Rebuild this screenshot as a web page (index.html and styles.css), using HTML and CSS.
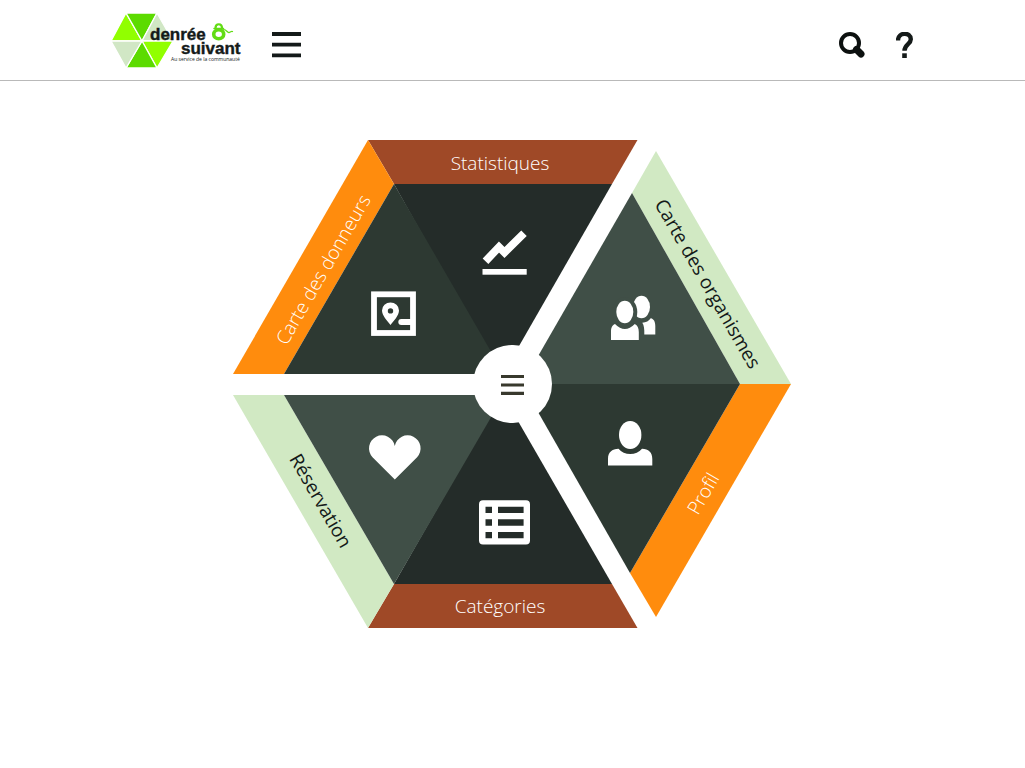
FILE: index.html
```html
<!DOCTYPE html>
<html lang="fr">
<head>
<meta charset="utf-8">
<meta name="viewport" content="width=device-width, initial-scale=1">
<title>Denrée Ô suivant</title>
<link rel="stylesheet" href="styles.css">
</head>
<body>
<header class="site-header">
  <div class="header-inner">
    <a class="brand" href="#accueil" aria-label="Denrée Ô suivant, accueil">
      <svg class="logo" viewBox="112 13 130 55">
        <g stroke="#fff" stroke-width="1.3" stroke-linejoin="round">
          <polygon fill="#91ff00" points="111,41 126,13 142,41"/>
          <polygon fill="#5cdb00" points="126,13 157,13 142,41"/>
          <polygon fill="#d1e7c5" points="157,13 173,41 142,41"/>
          <polygon fill="#91ff00" points="173,41 157,68 142,41"/>
          <polygon fill="#5cdb00" points="157,68 126,68 142,41"/>
          <polygon fill="#d1e7c5" points="126,68 111,41 142,41"/>
        </g>
        <text class="logo-name" x="150" y="40">denrée</text>
        <text class="logo-name" x="181" y="54">suivant</text>
        <text class="logo-tag" x="171" y="61">Au service de la communauté</text>
        <g fill="none" stroke="#62dc14" stroke-linecap="round">
          <ellipse cx="218.700" cy="34.300" rx="5" ry="4.500" stroke-width="3.600"/>
          <path d="M215.500 28C215.500 23 222 23 222 28" stroke-width="2.200"/>
          <path d="M214 28.500H223.500" stroke-width="1.500"/>
          <path d="M222.500 30C226 28 227 33 229 32.500S231 31 232.500 31.500" stroke-width="1.300"/>
        </g>
      </svg>
    </a>
    <button class="icon-button menu-button" type="button" aria-label="Menu">
      <svg width="30" height="26" viewBox="0 0 30 26"><path d="M0 2H29M0 12.700H29M0 23.400H29" stroke="#141a19" stroke-width="3.800"/></svg>
    </button>
    <div class="tools">
      <button class="icon-button" type="button" aria-label="Rechercher">
        <svg width="26" height="26" viewBox="0 0 26 26"><g fill="none" stroke="#0c100f"><circle cx="11" cy="11" r="9" stroke-width="4"/><path d="M17.500 17.500L22 22" stroke-width="7" stroke-linecap="round"/></g></svg>
      </button>
      <button class="icon-button" type="button" aria-label="Aide">
        <svg width="17" height="26" viewBox="0 0 17 26"><path d="M2 8.500C2 -.2 14.800 -.2 14.800 7.300C14.800 12.300 8.500 12 8.500 18.800" fill="none" stroke="#141a19" stroke-width="4.400"/><rect x="6.200" y="21.300" width="4.600" height="4.700" fill="#141a19"/></svg>
      </button>
    </div>
  </div>
</header>
<main class="content">
  <nav class="wheel" aria-label="Menu principal">
    <svg class="wheel-art" viewBox="233 140 559 488">
      <a href="#statistiques">
        <polygon class="rust" points="368,140 637.500,140 612,184 394,184"/>
        <polygon class="dark" points="394,184 612,184 503,374 500,374"/>
        <path d="M485.500 261.200L499 247L504.500 252.500L524 233.300" fill="none" stroke="#fff" stroke-width="7.800"/>
        <rect class="glyph" x="482.500" y="269" width="44.200" height="5.700"/>
        <text class="label" x="500" y="170">Statistiques</text>
      </a>
      <a href="#donneurs">
        <polygon class="orange" points="368,140 394,184 284,374 233,374"/>
        <polygon class="medium" points="394,184 504,374 284,374"/>
        <rect x="374" y="294.300" width="39" height="38.700" fill="none" stroke="#fff" stroke-width="5.800"/>
        <path class="glyph" fill-rule="evenodd" d="M390.500 325C387 320.500 382 315.500 382 310.500A8.500 8 0 0 1 399 310.500C399 315.500 394 320.500 390.500 325ZM390.500 308.200A2.700 2.700 0 1 0 390.500 313.600A2.700 2.700 0 1 0 390.500 308.200Z"/>
        <path d="M401.300 322H411" stroke="#fff" stroke-width="6" stroke-linecap="round"/>
        <text class="label" transform="translate(329 273) rotate(-60)">Carte des donneurs</text>
      </a>
      <a href="#organismes">
        <polygon class="pale" points="656,151 791,384 740,384 632,193"/>
        <polygon class="slate" points="632,193 740,384 522,384"/>
        <ellipse class="glyph" cx="641.500" cy="307" rx="8.500" ry="11.300"/>
        <path class="glyph" d="M642.300 322.700Q648 322.500 650.700 318.300C654 319 655.300 322 655.300 326V334.500H644.300C644.500 329 644 325 642.300 322.700Z"/>
        <ellipse class="slate" cx="624.800" cy="312" rx="12.500" ry="15"/>
        <ellipse class="glyph" cx="624.800" cy="312" rx="8.500" ry="11.200"/>
        <path class="glyph" d="M611 340V332C611 327.500 612 325.500 615 324Q624.800 334 634.800 324C637.500 325.500 638.800 328 638.800 332V340Z"/>
        <text class="label label-dark" transform="translate(702 287) rotate(60)">Carte des organismes</text>
      </a>
      <a href="#profil">
        <polygon class="orange" points="740,384 791,384 656,617 630,573"/>
        <polygon class="medium" points="522,384 740,384 630,573"/>
        <ellipse class="glyph" cx="630.200" cy="435" rx="11.200" ry="14"/>
        <path class="glyph" d="M608 465.500V459C608 452 612 449 618.500 448.700C624 455.700 636.500 455.700 642 448.700C648.500 449 652.300 452 652.300 459V465.500Z"/>
        <text class="label" transform="translate(709 497) rotate(-60)">Profil</text>
      </a>
      <a href="#categories">
        <polygon class="rust" points="394,584 612,584 637.500,628 368,628"/>
        <polygon class="dark" points="394,584 502,395 503,395 612,584"/>
        <path class="glyph" fill-rule="evenodd" d="M483 500.200H526Q530 500.200 530 504.200V540.500Q530 544.500 526 544.500H483Q479 544.500 479 540.500V504.200Q479 500.200 483 500.200ZM485.500 506.700V513H492V506.700ZM498 506.700V513H523.600V506.700ZM485.500 519.300V525.700H492V519.300ZM498 519.300V525.700H523.600V519.300ZM485.500 532V538.300H492V532ZM498 532V538.300H523.600V532Z"/>
        <text class="label" x="500" y="613">Catégories</text>
      </a>
      <a href="#reservation">
        <polygon class="pale" points="233,395 284,395 394,584 368,628"/>
        <polygon class="slate" points="284,395 504,395 394,584"/>
        <path class="glyph" d="M394.800 479.500L372.500 457.200A13 13 0 1 1 394.800 446A13 13 0 1 1 417.100 457.200Z"/>
        <text class="label label-dark" transform="translate(315 504) rotate(60)">Réservation</text>
      </a>
    </svg>
    <button class="hub" type="button" aria-label="Ouvrir le menu">
      <svg width="24" height="22" viewBox="0 0 24 22"><path d="M0 3.500H23M0 12H23M0 20.400H23" stroke="#38392d" stroke-width="3.200"/></svg>
    </button>
  </nav>
</main>
</body>
</html>
```
FILE: styles.css
```css
* {
  box-sizing: border-box;
}

body {
  margin: 0;
  background: #fff;
  color: #141a19;
  font-family: "Open Sans", "Noto Sans", sans-serif;
}

.site-header {
  border-bottom: 1px solid #b9b9b9;
  padding: 13px 16px 12px;
}

.header-inner {
  display: flex;
  align-items: flex-end;
  max-width: 801px;
  margin: 0 auto;
}

.brand,
.logo {
  display: block;
}

.logo {
  width: 130px;
  height: 55px;
}

.logo-name {
  font: bold 17px "Liberation Sans", Arial, sans-serif;
  fill: #141a19;
  stroke: #141a19;
  stroke-width: 0.4px;
}

.logo-tag {
  font: 5px "Open Sans", sans-serif;
  fill: #141a19;
}

.icon-button,
.hub {
  border: 0;
  padding: 0;
  background: none;
  cursor: pointer;
}

.icon-button {
  display: block;
  margin-bottom: 10px;
}

.icon-button svg,
.hub svg {
  display: block;
}

.menu-button {
  margin-left: 30px;
}

.tools {
  display: flex;
  gap: 31px;
  margin-left: auto;
}

.content {
  padding: 59px 16px 64px;
}

.wheel {
  display: grid;
  place-items: center;
  max-width: 559px;
  margin: 0 auto;
}

.wheel-art,
.hub {
  grid-area: 1 / 1;
}

.wheel-art {
  display: block;
  width: 100%;
}

.hub {
  display: grid;
  place-items: center;
  width: 14%;
  aspect-ratio: 1;
  border-radius: 50%;
  background: #fff;
}

.label {
  font-size: 19px;
  font-weight: 300;
  text-anchor: middle;
  fill: #fff;
}

.label-dark {
  font-weight: 400;
  fill: #141a19;
}

.glyph {
  fill: #fff;
}

.rust {
  fill: #9f4927;
}

.orange {
  fill: #ff8c0d;
}

.pale {
  fill: #d1e9c3;
}

.dark {
  fill: #242c29;
}

.medium {
  fill: #2d3932;
}

.slate {
  fill: #404f47;
}
```
